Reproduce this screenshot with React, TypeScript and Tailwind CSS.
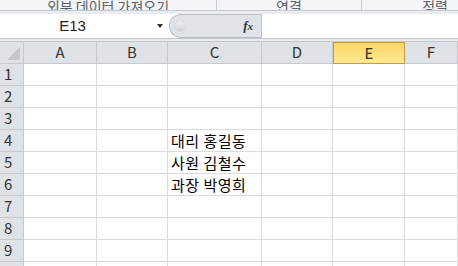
import React from "react";

const cols = ["A", "B", "C", "D", "E", "F"];
const widths = "grid-cols-[24px_73px_71px_94px_71px_72px_1fr]";

const cells: Record<string, string> = {
  "4": "대리 홍길동",
  "5": "사원 김철수",
  "6": "과장 박영희",
};

const font = { fontFamily: '"Noto Sans CJK KR", "Liberation Sans", sans-serif' };

export default function App() {
  const rows = Array.from({ length: 10 }, (_, i) => i + 1);
  return (
    <div className="h-[266px] w-[458px] overflow-hidden bg-white text-[#1f1f1f]" style={font}>
      {/* ribbon bottom (cut off) */}
      <div className="flex h-[11px] overflow-hidden border-b border-[#c5cad1] bg-[#f3f5f8] text-[14px] text-[#5a5f66]">
        <div className="flex w-[217px] items-end justify-center border-r border-[#c9ced5]">
          <span className="-mb-[3px] leading-none">외부 데이터 가져오기</span>
        </div>
        <div className="flex w-[145px] items-end justify-center border-r border-[#c9ced5]">
          <span className="-mb-[3px] leading-none">연결</span>
        </div>
        <div className="flex flex-1 items-end justify-end pr-[10px]">
          <span className="-mb-[3px] leading-none">정렬</span>
        </div>
      </div>
      <div className="h-[3px] bg-[#e9ecf0]" />

      {/* formula bar */}
      <div className="flex h-[24px] items-stretch bg-white">
        <div className="relative flex w-[169px] items-center">
          <span className="w-full pr-[24px] text-center text-[15px]" style={{ fontFamily: '"Liberation Sans", sans-serif' }}>
            E13
          </span>
          <span className="absolute right-[6px] top-[10px] h-0 w-0 border-x-[3.5px] border-t-[4px] border-x-transparent border-t-[#333]" />
        </div>
        <div className="flex w-[92px] items-center justify-between rounded-l-[12px] border-y border-l border-[#b9bec6] bg-[#e0e3e8] pl-[5px] pr-[8px]">
          <span className="h-[10px] w-[10px] rounded-full bg-gradient-to-b from-[#eef0f3] to-[#cfd3d9] shadow-[0_0_1px_#aab]" />
          <span className="text-[13px] font-bold italic text-[#333]" style={{ fontFamily: '"Liberation Serif", serif' }}>
            f<span className="text-[11px]">x</span>
          </span>
        </div>
        <div className="flex-1 border-l border-[#c3c7cd]" />
      </div>
      <div className="h-[4px] border-y border-[#c2c7ce] bg-[#e9ecf0]" />

      {/* sheet */}
      <div className={`grid ${widths}`}>
        <div className="relative h-[22px] border-b border-r border-[#c5c9cf] bg-[#dfe3e8]">
          <span
            className="absolute bottom-[3px] right-[3px] h-0 w-0"
            style={{ borderBottom: "13px solid #c4c8ce", borderLeft: "13px solid transparent" }}
          />
        </div>
        {cols.map((c) =>
          c === "E" ? (
            <div
              key={c}
              className="flex h-[22px] items-center justify-center border border-[#c29a4a] bg-gradient-to-b from-[#fcd664] to-[#fde992] text-[15px] text-[#333]"
            >
              {c}
            </div>
          ) : (
            <div
              key={c}
              className="flex h-[22px] items-center justify-center border-b border-r border-[#c5c9cf] bg-[#dfe3e8] text-[15px] text-[#333]"
            >
              {c}
            </div>
          )
        )}
        {rows.map((r) => (
          <React.Fragment key={r}>
            <div className="flex h-[22px] items-center border-b border-r border-[#c5c9cf] bg-[#dfe3e8] pl-[4px] text-[15px] text-[#333]">
              {r}
            </div>
            {cols.map((c) => (
              <div
                key={c}
                className="flex h-[22px] items-center border-b border-r border-[#dadcdd] pl-[3px] text-[15px] leading-none tracking-[0.5px] text-black"
              >
                {c === "C" ? cells[String(r)] ?? "" : ""}
              </div>
            ))}
          </React.Fragment>
        ))}
      </div>
    </div>
  );
}
